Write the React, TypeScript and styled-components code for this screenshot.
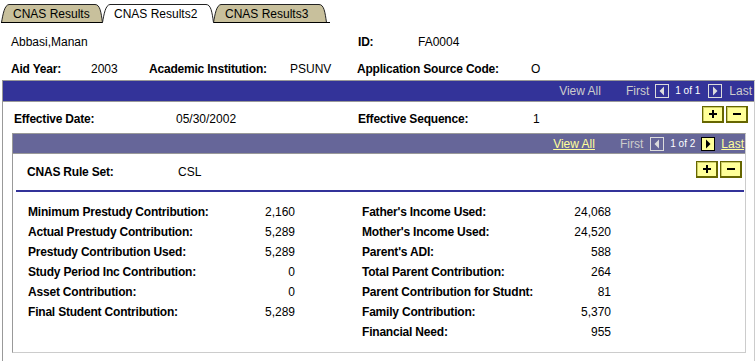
import React from "react";
import styled, { createGlobalStyle } from "styled-components";

const Global = createGlobalStyle`
  html, body { margin: 0; padding: 0; background: #fff; }
  body { font-family: "Liberation Sans", Arial, sans-serif; font-size: 12px; color: #000; }
  * { box-sizing: border-box; }
`;

const Page = styled.div`
  width: 756px;
  height: 361px;
  overflow: hidden;
  background: #fff;
`;

/* ---------- Tabs ---------- */
const TabStrip = styled.div`
  display: flex;
  height: 23px;
  padding-left: 1px;
`;
const TabWrap = styled.div<{ $w: number; $active?: boolean }>`
  position: relative;
  flex: none;
  width: ${(p) => p.$w}px;
  height: 23px;
  margin-right: -1px;
  z-index: ${(p) => (p.$active ? 2 : 1)};
`;
const TabShape = styled.svg`
  position: absolute;
  left: 0;
  top: 0;
`;
const TabLabel = styled.span`
  position: relative;
  display: block;
  padding: 7px 0 0 12px;
  line-height: 14px;
  font-size: 12px;
  white-space: nowrap;
`;
const TabTail = styled.div`
  flex: none;
  width: 4px;
  height: 23px;
  border-bottom: 1px solid #000;
`;

const Tab: React.FC<{ w: number; active?: boolean; label: string }> = ({ w, active, label }) => {
  const d = `M0.5 22.5 C2 14 3.5 5 8 4.5 H${w - 8} C${w - 3} 4.5 ${w - 2} 12 ${w - 0.5} 22.5`;
  return (
    <TabWrap $w={w} $active={active}>
      <TabShape width={w} height={23} viewBox={`0 0 ${w} 23`}>
        <path d={d} fill={active ? "#ffffff" : "#c8c09c"} stroke="#222" strokeWidth={1} />
        {!active && <path d={`M0 22.5 H${w}`} stroke="#000" strokeWidth={1} />}
      </TabShape>
      <TabLabel>{label}</TabLabel>
    </TabWrap>
  );
};

/* ---------- Header info ---------- */
const InfoRow = styled.div<{ $mt: number }>`
  display: flex;
  height: 20px;
  line-height: 20px;
  margin-top: ${(p) => p.$mt}px;
  padding-left: 11px;
  white-space: nowrap;
`;
const Cell = styled.span<{ $w?: number; $bold?: boolean; $mt?: number }>`
  display: block;
  flex: none;
  ${(p) => (p.$w ? `width: ${p.$w}px;` : "")}
  font-weight: ${(p) => (p.$bold ? 700 : 400)};
  letter-spacing: ${(p) => (p.$bold ? "-0.2px" : "0")};
  ${(p) => (p.$mt !== undefined ? `margin-top: ${p.$mt}px; line-height: 14px;` : "")}
  white-space: nowrap;
`;

/* ---------- Boxes ---------- */
const Outer = styled.div`
  margin: 1px 1px 0 2px;
  height: 300px;
  border: 1px solid;
  border-color: #999999 #cccccc #cccccc #999999;
`;
const Inner = styled.div`
  margin: 0 8px 0 9px;
  border: 1px solid;
  border-color: #999999 #cccccc #cccccc #999999;
`;

const NavBar = styled.div<{ $bg: string; $h: number; $pr: number }>`
  display: flex;
  align-items: center;
  justify-content: flex-end;
  height: ${(p) => p.$h + 1}px;
  padding-right: ${(p) => p.$pr}px;
  background: ${(p) => p.$bg};
  border-bottom: 1px solid #999999;
  white-space: nowrap;
`;
const NavText = styled.span<{ $ml?: number; $color: string; $link?: boolean; $small?: boolean }>`
  margin-left: ${(p) => p.$ml ?? 0}px;
  color: ${(p) => p.$color};
  font-size: ${(p) => (p.$small ? "10px" : "12px")};
  text-decoration: ${(p) => (p.$link ? "underline" : "none")};
  line-height: 14px;
`;
const ArrowBox = styled.span<{ $ml: number; $active?: boolean }>`
  display: flex;
  align-items: center;
  justify-content: center;
  width: 14px;
  height: 14px;
  margin-left: ${(p) => p.$ml}px;
  border: 1px solid ${(p) => (p.$active ? "#000000" : "#dcdcdc")};
  background: ${(p) => (p.$active ? "#ffff99" : "transparent")};
`;

const Arrow: React.FC<{ dir: "l" | "r"; ml: number; active?: boolean }> = ({ dir, ml, active }) => (
  <ArrowBox $ml={ml} $active={active}>
    <svg width="12" height="12" viewBox="0 0 12 12">
      <polygon
        points={dir === "l" ? "8,1.5 8,10.5 3.5,6" : "4,1.5 4,10.5 8.5,6"}
        fill={active ? "#000000" : "#dcdcdc"}
      />
    </svg>
  </ArrowBox>
);

const FieldRow = styled.div<{ $h: number; $pt: number; $pl: number; $pr: number }>`
  display: flex;
  align-items: flex-start;
  height: ${(p) => p.$h}px;
  padding: ${(p) => p.$pt}px ${(p) => p.$pr}px 0 ${(p) => p.$pl}px;
  white-space: nowrap;
`;
const BtnPair = styled.div`
  display: flex;
  gap: 2px;
  margin-left: auto;
`;
const YBtn = styled.span`
  display: flex;
  align-items: center;
  justify-content: center;
  width: 22px;
  height: 17px;
  background: #ffff99;
  border: 1px solid #666600;
  border-right-width: 2px;
  border-bottom-width: 2px;
  box-shadow: inset 1px 1px 0 #cccc66;
`;
const PlusMinus: React.FC = () => (
  <BtnPair>
    <YBtn>
      <svg width="10" height="10" viewBox="0 0 10 10">
        <rect x="1" y="4" width="8" height="2" fill="#000" />
        <rect x="4" y="1" width="2" height="8" fill="#000" />
      </svg>
    </YBtn>
    <YBtn>
      <svg width="10" height="10" viewBox="0 0 10 10">
        <rect x="1" y="4" width="8" height="2" fill="#000" />
      </svg>
    </YBtn>
  </BtnPair>
);

const Divider = styled.div`
  height: 2px;
  margin: 0 1px 0 3px;
  background: #333399;
`;

const DataGrid = styled.div`
  display: grid;
  grid-template-columns: 200px 67px 67px 180px 69px;
  grid-auto-rows: 20px;
  line-height: 20px;
  padding: 10px 0 10px 15px;
  white-space: nowrap;
`;
const DLabel = styled.span<{ $col: number }>`
  grid-column: ${(p) => p.$col};
  font-weight: 700;
  letter-spacing: -0.2px;
`;
const DValue = styled.span<{ $col: number }>`
  grid-column: ${(p) => p.$col};
  text-align: right;
`;

const left: [string, string][] = [
  ["Minimum Prestudy Contribution:", "2,160"],
  ["Actual Prestudy Contribution:", "5,289"],
  ["Prestudy Contribution Used:", "5,289"],
  ["Study Period Inc Contribution:", "0"],
  ["Asset Contribution:", "0"],
  ["Final Student Contribution:", "5,289"],
];
const right: [string, string][] = [
  ["Father's Income Used:", "24,068"],
  ["Mother's Income Used:", "24,520"],
  ["Parent's ADI:", "588"],
  ["Total Parent Contribution:", "264"],
  ["Parent Contribution for Studnt:", "81"],
  ["Family Contribution:", "5,370"],
  ["Financial Need:", "955"],
];

export default function App() {
  return (
    <Page>
      <Global />
      <TabStrip>
        <Tab w={102} label="CNAS Results" />
        <Tab w={112} active label="CNAS Results2" />
        <Tab w={114} label="CNAS Results3" />
        <TabTail />
      </TabStrip>

      <InfoRow $mt={9}>
        <Cell $w={347}>Abbasi,Manan</Cell>
        <Cell $w={60} $bold>ID:</Cell>
        <Cell>FA0004</Cell>
      </InfoRow>
      <InfoRow $mt={7}>
        <Cell $w={80} $bold>Aid Year:</Cell>
        <Cell $w={58}>2003</Cell>
        <Cell $w={141} $bold>Academic Institution:</Cell>
        <Cell $w={67}>PSUNV</Cell>
        <Cell $w={174} $bold>Application Source Code:</Cell>
        <Cell>O</Cell>
      </InfoRow>

      <Outer>
        <NavBar $bg="#333399" $h={20} $pr={2}>
          <NavText $color="#cccccc">View All</NavText>
          <NavText $ml={25} $color="#cccccc">First</NavText>
          <Arrow dir="l" ml={6} />
          <NavText $ml={6} $color="#ffffff" $small>1 of 1</NavText>
          <Arrow dir="r" ml={8} />
          <NavText $ml={7} $color="#cccccc">Last</NavText>
        </NavBar>

        <FieldRow $h={31} $pt={4} $pl={11} $pr={6}>
          <Cell $w={162} $bold $mt={6}>Effective Date:</Cell>
          <Cell $w={182} $mt={6}>05/30/2002</Cell>
          <Cell $w={175} $bold $mt={6}>Effective Sequence:</Cell>
          <Cell $mt={6}>1</Cell>
          <PlusMinus />
        </FieldRow>

        <Inner>
          <NavBar $bg="#666699" $h={19} $pr={1}>
            <NavText $color="#ffff99" $link>View All</NavText>
            <NavText $ml={25} $color="#cccccc">First</NavText>
            <Arrow dir="l" ml={7} />
            <NavText $ml={6} $color="#ffffff" $small>1 of 2</NavText>
            <Arrow dir="r" ml={6} active />
            <NavText $ml={6} $color="#ffff99" $link>Last</NavText>
          </NavBar>

          <FieldRow $h={36} $pt={7} $pl={14} $pr={3}>
            <Cell $w={151} $bold $mt={4}>CNAS Rule Set:</Cell>
            <Cell $mt={4}>CSL</Cell>
            <PlusMinus />
          </FieldRow>

          <Divider />

          <DataGrid>
            {right.map((r, i) => (
              <React.Fragment key={i}>
                {left[i] ? (
                  <>
                    <DLabel $col={1}>{left[i][0]}</DLabel>
                    <DValue $col={2}>{left[i][1]}</DValue>
                  </>
                ) : null}
                <DLabel $col={4}>{r[0]}</DLabel>
                <DValue $col={5}>{r[1]}</DValue>
              </React.Fragment>
            ))}
          </DataGrid>
        </Inner>
      </Outer>
    </Page>
  );
}
